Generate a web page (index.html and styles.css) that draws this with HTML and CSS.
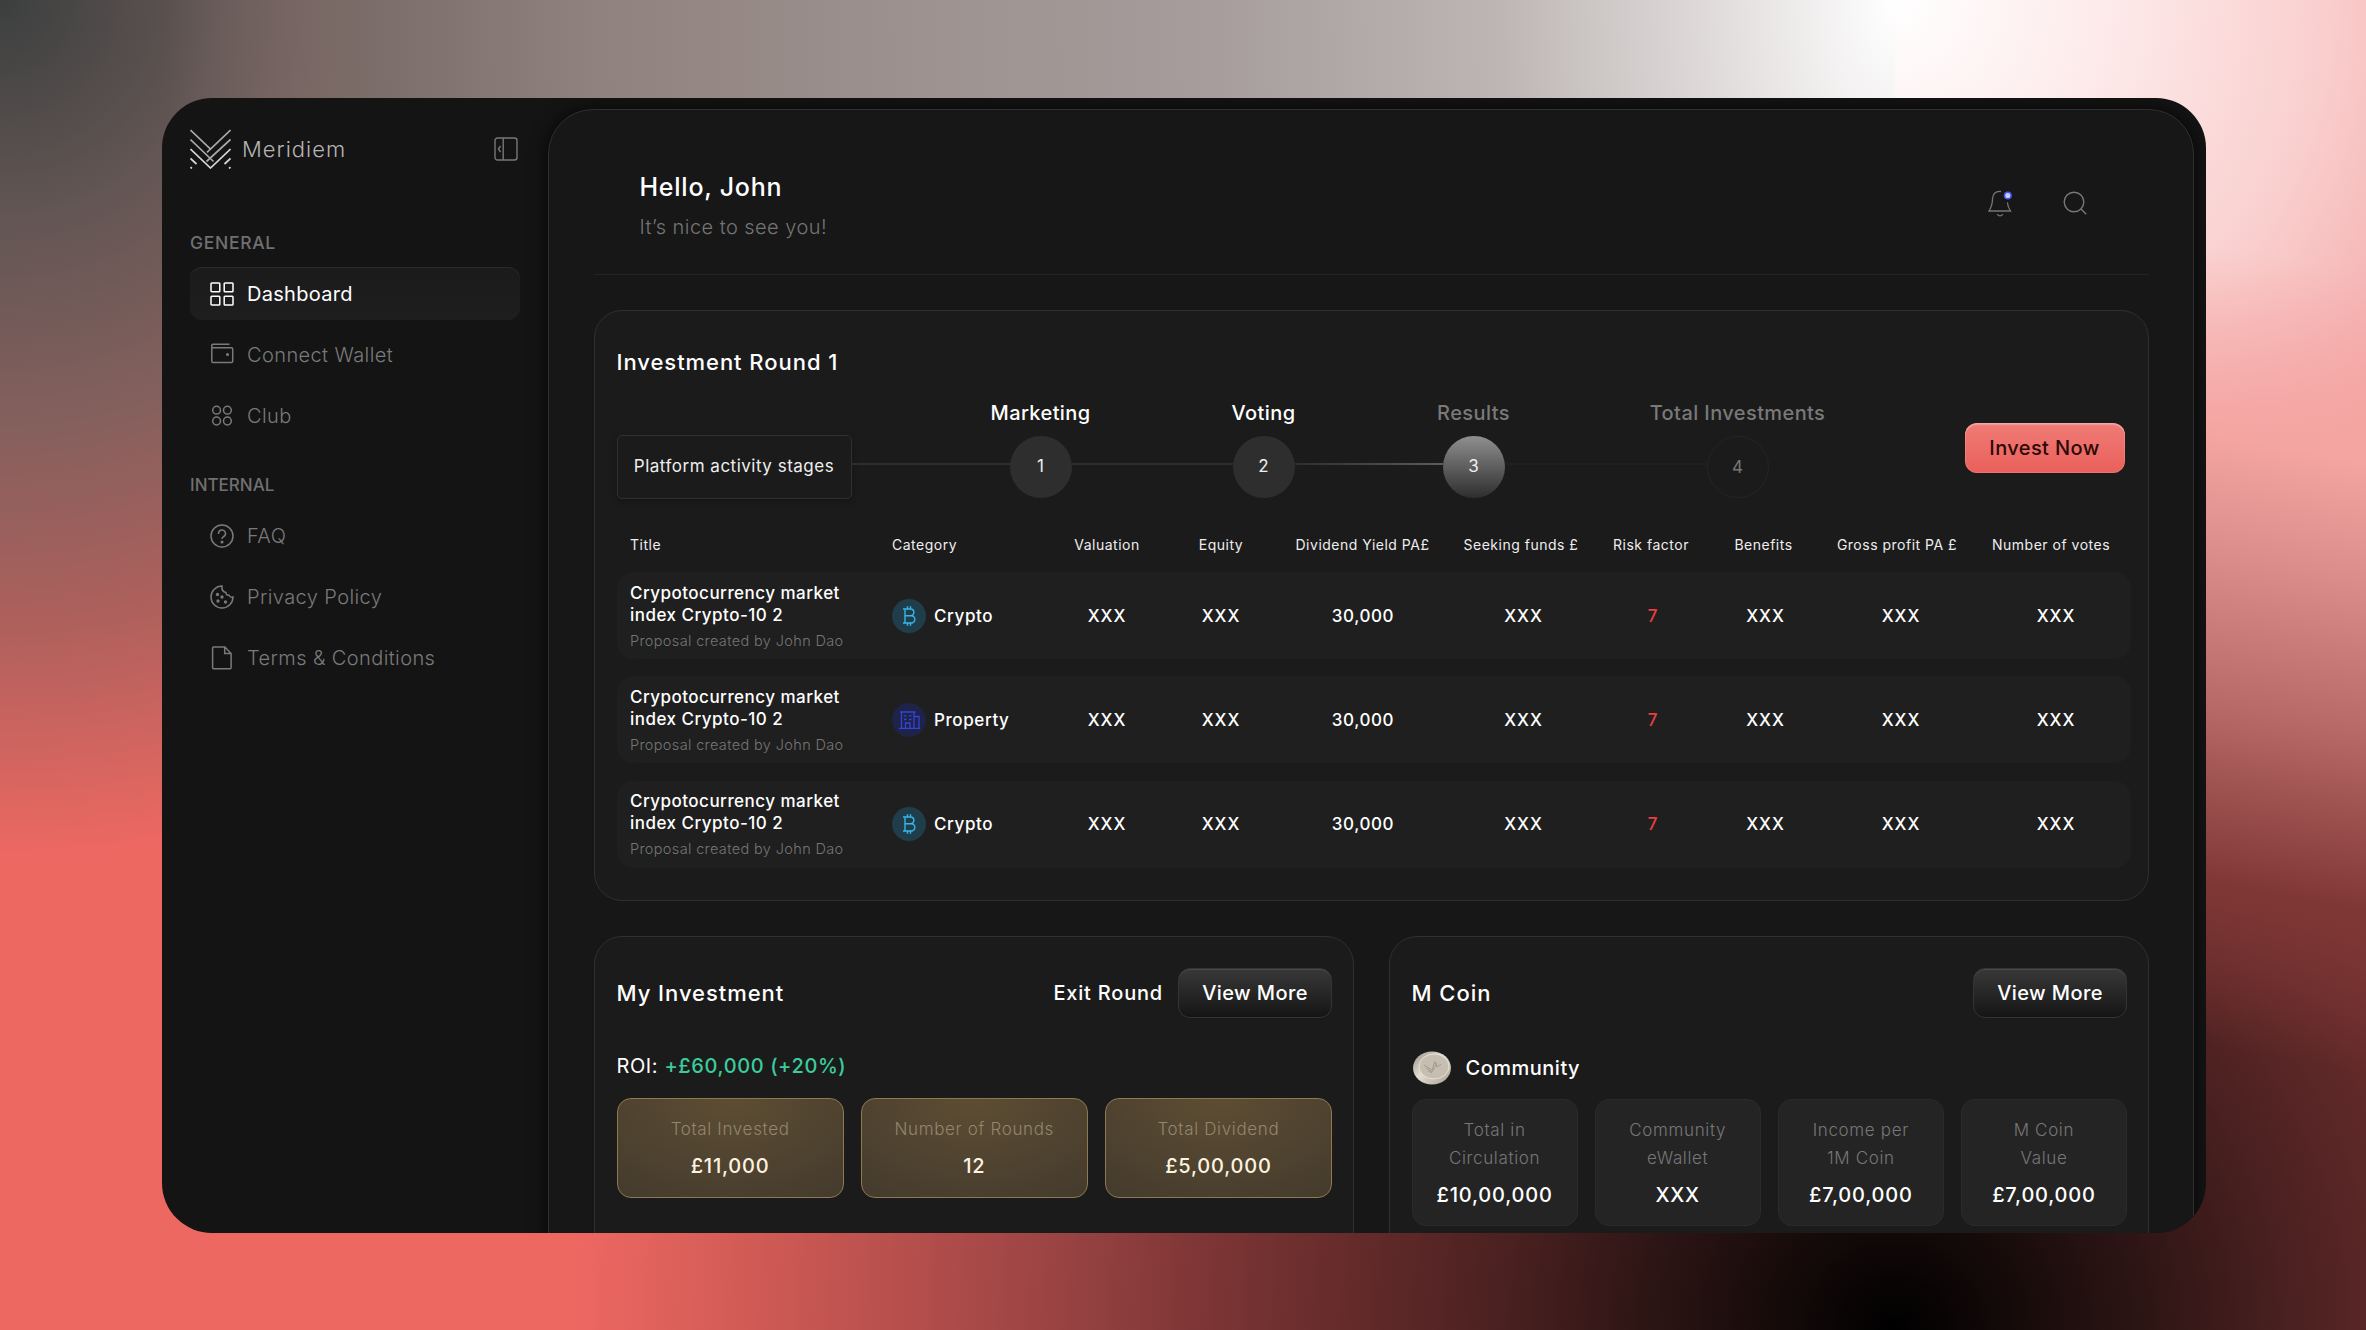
FILE: index.html
```html
<!DOCTYPE html>
<html lang="en">
<head>
    <meta charset="UTF-8">
    <meta name="viewport" content="width=device-width, initial-scale=1.0">
    <title>Meridiem Dashboard</title>
    <link rel="stylesheet" href="styles.css">
</head>
<body>
    <div class="window">
        <aside class="sidebar">
            <div class="brand">
                <svg class="brand-logo" width="41" height="40" viewBox="0 0 41 40" fill="none" stroke="#a8a8a8" stroke-width="1.7">
                    <path d="M.5 1l20 19 20-19"/>
                    <path d="M.5 10.500L23.500 32.500M40.500 10.500L16.500 32.500M17 23.300l3.500-3.300"/>
                    <path d="M.5 20l20 19 20-19" stroke="#d5d5d5"/>
                    <path d="M.5 29.500l6 5.500M40.500 29.500l-6 5.500M.5 38.200l1.500 1.200M40.500 38.200L39 39.400" stroke="#d5d5d5"/>
                </svg>
                <span class="brand-name">Meridiem</span>
                <svg class="brand-toggle" width="24" height="24" viewBox="0 0 24 24" fill="none" stroke="#777" stroke-width="1.4">
                    <rect x="1" y="1" width="22" height="22" rx="2.500"/>
                    <path d="M9.200 1v22M6.500 9L4.500 12l2 3"/>
                </svg>
            </div>

            <div class="nav-title">GENERAL</div>
            <nav class="nav">
                <a class="nav-item active">
                    <svg width="24" height="24" viewBox="0 0 24 24">
                        <rect x="1" y="1" width="8.800" height="8.800" rx=".8"/>
                        <rect x="14.200" y="1" width="8.800" height="8.800" rx=".8"/>
                        <rect x="1" y="14.200" width="8.800" height="8.800" rx=".8"/>
                        <rect x="14.200" y="14.200" width="8.800" height="8.800" rx=".8"/>
                    </svg>
                    Dashboard
                </a>
                <a class="nav-item">
                    <svg width="24" height="24" viewBox="0 0 24 24">
                        <path d="M19.500 1.200H3a1.200 1.200 0 0 0-1.200 1.200v15.800A1.300 1.300 0 0 0 3 19.500h18.500a1.200 1.200 0 0 0 1.200-1.200V6a1.200 1.200 0 0 0-1.200-1.200H1.800"/>
                        <circle cx="17.500" cy="11.500" r=".8" class="dot"/>
                    </svg>
                    Connect Wallet
                </a>
                <a class="nav-item">
                    <svg width="24" height="24" viewBox="0 0 24 24">
                        <circle cx="6.600" cy="6.200" r="3.900"/>
                        <circle cx="17.400" cy="6.200" r="3.900"/>
                        <circle cx="6.600" cy="17" r="3.900"/>
                        <circle cx="17.400" cy="17" r="3.900"/>
                    </svg>
                    Club
                </a>
            </nav>

            <div class="nav-title internal">INTERNAL</div>
            <nav class="nav">
                <a class="nav-item">
                    <svg width="24" height="24" viewBox="0 0 24 24">
                        <circle cx="12" cy="12" r="11"/>
                        <path d="M8.500 10V9.500a3.500 3.500 0 1 1 5.200 3c-1.200.7-1.700 1.200-1.700 2.500"/>
                        <circle cx="12" cy="18" r=".8" class="dot"/>
                    </svg>
                    FAQ
                </a>
                <a class="nav-item">
                    <svg width="24" height="24" viewBox="0 0 24 24">
                        <path d="M12 1a11 11 0 1 0 11 11c-1.700.5-3.300-.2-4-1.800-2 .3-3.200-.8-3-2.700C13.300 7 11.500 4.500 12 1z"/>
                        <circle cx="7.500" cy="9.500" r=".9" class="dot"/>
                        <circle cx="12" cy="12" r=".9" class="dot"/>
                        <circle cx="8" cy="16" r=".9" class="dot"/>
                        <circle cx="15.500" cy="17" r=".9" class="dot"/>
                    </svg>
                    Privacy Policy
                </a>
                <a class="nav-item">
                    <svg width="24" height="24" viewBox="0 0 24 24">
                        <path d="M3.500 1h11.400l6.200 6.500v14.300a.9.900 0 0 1-.9.900H3.500a.9.900 0 0 1-.9-.9V1.900a.9.900 0 0 1 .9-.9zM14.700 1v6.500h6.400"/>
                    </svg>
                    Terms &amp; Conditions
                </a>
            </nav>
        </aside>

        <main class="main">
            <header class="header">
                <div>
                    <h1>Hello, John</h1>
                    <p>It’s nice to see you!</p>
                </div>
                <div class="header-icons">
                    <svg width="26" height="28" viewBox="0 0 26 28" fill="none" stroke="#777" stroke-width="1.300" stroke-linecap="round">
                        <path d="M13.500 2.500c-5-.5-8 2.500-8 7.500 0 5-1 8-3.500 12h21.500c-1.700-2.500-2.700-4.800-3-8M10.500 25.500c1 1.700 4 1.700 5 0"/>
                        <circle cx="20.800" cy="6.500" r="3.300" fill="#c5ccff" stroke="#4a55e8" stroke-width="1.500"/>
                    </svg>
                    <svg width="24" height="24" viewBox="0 0 24 24" fill="none" stroke="#777" stroke-width="1.400">
                        <circle cx="11" cy="11" r="9.800"/>
                        <path d="M18 18l5.200 5.200"/>
                    </svg>
                </div>
            </header>

            <section class="card round">
                <h2>Investment Round 1</h2>
                <div class="stages">
                    <div class="stage-box">Platform activity stages</div>
                    <div class="line l1"></div>
                    <div class="step"><span class="step-name">Marketing</span><span class="circle">1</span></div>
                    <div class="line l2"></div>
                    <div class="step"><span class="step-name">Voting</span><span class="circle">2</span></div>
                    <div class="line l3"></div>
                    <div class="step current"><span class="step-name">Results</span><span class="circle">3</span></div>
                    <div class="line l4"></div>
                    <div class="step next"><span class="step-name">Total Investments</span><span class="circle">4</span></div>
                    <button class="btn btn-red">Invest Now</button>
                </div>

                <div class="table-head">
                    <span class="left">Title</span>
                    <span class="left">Category</span>
                    <span>Valuation</span>
                    <span>Equity</span>
                    <span>Dividend Yield PA£</span>
                    <span>Seeking funds £</span>
                    <span>Risk factor</span>
                    <span>Benefits</span>
                    <span>Gross profit PA £</span>
                    <span>Number of votes</span>
                </div>
                <div class="table-row">
                    <div class="proposal">
                        <strong>Crypotocurrency market<br>index Crypto-10 2</strong>
                        <small>Proposal created by John Dao</small>
                    </div>
                    <div class="category">
                        <svg width="34" height="34" viewBox="0 0 34 34" fill="none" stroke="#38b6e8" stroke-width="1.400">
                            <circle cx="17" cy="17" r="17" fill="#203d4b" stroke="none"/>
                            <path d="M11 10h7.500a3.300 3.300 0 0 1 0 6.700H13M18.500 16.700h.7a3.600 3.600 0 0 1 0 7.300H11M13 10v14M15.500 7.300V10M18.500 7.300V10M15.500 24v2.800M18.500 24v2.800"/>
                        </svg>
                        Crypto
                    </div>
                    <span class="xxx">XXX</span>
                    <span class="xxx">XXX</span>
                    <span>30,000</span>
                    <span class="xxx">XXX</span>
                    <span class="risk">7</span>
                    <span class="xxx">XXX</span>
                    <span class="xxx">XXX</span>
                    <span class="xxx">XXX</span>
                </div>
                <div class="table-row">
                    <div class="proposal">
                        <strong>Crypotocurrency market<br>index Crypto-10 2</strong>
                        <small>Proposal created by John Dao</small>
                    </div>
                    <div class="category">
                        <svg width="34" height="34" viewBox="0 0 34 34" fill="none" stroke="#2f45e0" stroke-width="1.300">
                            <circle cx="17" cy="17" r="17" fill="#1e2347" stroke="none"/>
                            <path d="M7 25.300h21M9.500 25V9M22 25V9M8 9h15.500M22 13.500h5V25M13.500 25v-5h4.500V25M12 12.800h2.500M17 12.800h2.500M12 16.500h2.500M17 16.500h2.500"/>
                        </svg>
                        Property
                    </div>
                    <span class="xxx">XXX</span>
                    <span class="xxx">XXX</span>
                    <span>30,000</span>
                    <span class="xxx">XXX</span>
                    <span class="risk">7</span>
                    <span class="xxx">XXX</span>
                    <span class="xxx">XXX</span>
                    <span class="xxx">XXX</span>
                </div>
                <div class="table-row">
                    <div class="proposal">
                        <strong>Crypotocurrency market<br>index Crypto-10 2</strong>
                        <small>Proposal created by John Dao</small>
                    </div>
                    <div class="category">
                        <svg width="34" height="34" viewBox="0 0 34 34" fill="none" stroke="#38b6e8" stroke-width="1.400">
                            <circle cx="17" cy="17" r="17" fill="#203d4b" stroke="none"/>
                            <path d="M11 10h7.500a3.300 3.300 0 0 1 0 6.700H13M18.500 16.700h.7a3.600 3.600 0 0 1 0 7.300H11M13 10v14M15.500 7.300V10M18.500 7.300V10M15.500 24v2.800M18.500 24v2.800"/>
                        </svg>
                        Crypto
                    </div>
                    <span class="xxx">XXX</span>
                    <span class="xxx">XXX</span>
                    <span>30,000</span>
                    <span class="xxx">XXX</span>
                    <span class="risk">7</span>
                    <span class="xxx">XXX</span>
                    <span class="xxx">XXX</span>
                    <span class="xxx">XXX</span>
                </div>
            </section>

            <div class="bottom">
                <section class="card panel">
                    <div class="panel-head">
                        <h2>My Investment</h2>
                        <a class="exit">Exit Round</a>
                        <button class="btn btn-dark">View More</button>
                    </div>
                    <div class="roi">ROI: <b>+£60,000 (+20%)</b></div>
                    <div class="tiles">
                        <div class="tile gold"><span>Total Invested</span><b>£11,000</b></div>
                        <div class="tile gold"><span>Number of Rounds</span><b>12</b></div>
                        <div class="tile gold"><span>Total Dividend</span><b>£5,00,000</b></div>
                    </div>
                </section>

                <section class="card panel">
                    <div class="panel-head">
                        <h2>M Coin</h2>
                        <button class="btn btn-dark">View More</button>
                    </div>
                    <div class="community">
                        <svg width="40" height="34" viewBox="0 0 40 34">
                            <defs>
                                <linearGradient id="coin" x1="0" y1="0" x2="1" y2="1">
                                    <stop offset="0" stop-color="#9a9084"/>
                                    <stop offset=".45" stop-color="#e2ddd2"/>
                                    <stop offset="1" stop-color="#a89f90"/>
                                </linearGradient>
                            </defs>
                            <ellipse cx="20" cy="17" rx="19" ry="16.500" fill="url(#coin)"/>
                            <ellipse cx="22" cy="15.500" rx="15" ry="12.500" fill="#c6beb0" stroke="#ece8df" stroke-width=".8"/>
                            <path d="M12 14l8 5 3-9M14 17l6 4 5-9M16 20l4 2M23 11l2 5 4-3" fill="none" stroke="#9b9387" stroke-width=".8"/>
                        </svg>
                        Community
                    </div>
                    <div class="tiles">
                        <div class="tile"><span>Total in<br>Circulation</span><b>£10,00,000</b></div>
                        <div class="tile"><span>Community<br>eWallet</span><b>XXX</b></div>
                        <div class="tile"><span>Income per<br>1M Coin</span><b>£7,00,000</b></div>
                        <div class="tile"><span>M Coin<br>Value</span><b>£7,00,000</b></div>
                    </div>
                </section>
            </div>
        </main>
    </div>
</body>
</html>
```
FILE: styles.css
```css
* {
    box-sizing: border-box;
}
body {
    margin: 0;
    height: 1330px;
    padding: 98px 160px 97px 162px;
    overflow: hidden;
    font-family: Inter, "Liberation Sans", sans-serif;
    color: #fff;
    background:
        linear-gradient(190deg, rgba(246, 185, 185, 0) 20%, #f4a5a2 34%, #d98c8a 43%, #b76967 54%, #7f3735 67%, rgba(110, 46, 44, 0) 79%) right top / 166px 1330px no-repeat,
        radial-gradient(circle at 0 0, #fff 0, #fde9e9 220px, #f9cfce 430px, #f6b9b9 540px, #f4a5a2 640px) right top / 471px 480px no-repeat,
        radial-gradient(ellipse 1880px 3500px at 1895px 0, #fff 0, #e2dedd 9%, #bdb6b5 21%, #a59c9b 37%, #9c918f 53%, #90827e 69%, #7b6d69 81%, rgba(98, 88, 86, 0) 92%) left top / 100% 480px no-repeat,
        radial-gradient(circle at 1895px 1330px, #000 0, #2a1413 235px, #4a2020 390px, #632a2a 537px, #7d3535 690px, #9a4343 840px, #b54f4c 990px, #d05a55 1140px, rgba(238, 104, 98, 0) 1325px),
        radial-gradient(circle at 0 0, #3c3f3f 0, #635654 220px, #83605d 420px, #ad605c 620px, #ee6862 860px);
}
h1, h2, p {
    margin: 0;
    font-weight: 500;
}
.window {
    display: flex;
    width: 2044px;
    height: 1135px;
    overflow: hidden;
    border-radius: 50px;
    background: #141414;
}

/* sidebar */
.sidebar {
    width: 386px;
    flex: none;
    padding: 30px 28px 0;
}
.brand {
    display: flex;
    align-items: center;
    height: 42px;
}
.brand-name {
    margin-left: 11px;
    font-size: 22px;
    font-weight: 300;
    letter-spacing: 1px;
    color: #b4b4b4;
}
.brand-toggle {
    margin-left: auto;
    margin-right: 2px;
}
.nav-title {
    margin-top: 63px;
    height: 20px;
    line-height: 20px;
    font-size: 17.5px;
    font-weight: 500;
    letter-spacing: 0.7px;
    color: #707070;
}
.nav-title.internal {
    margin-top: 33px;
    font-size: 17px;
    letter-spacing: 0;
}
.nav {
    display: flex;
    flex-direction: column;
    gap: 8px;
    margin-top: 14px;
}
.nav-item {
    display: flex;
    align-items: center;
    height: 53px;
    gap: 13.5px;
    padding-left: 19.5px;
    border-radius: 12px;
    font-size: 20px;
    font-weight: 300;
    letter-spacing: 0.4px;
    color: #7a7a7a;
}
.nav-item svg {
    fill: none;
    stroke: #7a7a7a;
    stroke-width: 1.5;
}
.nav-item .dot {
    fill: #7a7a7a;
}
.nav-item.active {
    width: 330px;
    background: linear-gradient(#1b1b1b, #1e1e1e);
    box-shadow: inset 0 1px 0 #2a2a2a;
    font-weight: 400;
    letter-spacing: 0.3px;
    color: #fff;
}
.nav-item.active svg {
    stroke: #fff;
}

/* main */
.main {
    flex: none;
    width: 1646px;
    height: 1240px;
    margin-top: 11px;
    padding: 0 44.5px;
    border: 1px solid #303030;
    border-radius: 45px;
    background: #171717;
    box-shadow: 0 0 18px rgba(0, 0, 0, 0.7);
}
.header {
    display: flex;
    justify-content: space-between;
    height: 165px;
    padding: 62px 62px 0 46px;
    border-bottom: 1px solid #242424;
}
.header h1 {
    line-height: 30px;
    font-size: 25px;
    font-weight: 500;
    letter-spacing: 0.75px;
}
.header p {
    margin-top: 12px;
    line-height: 26px;
    font-size: 20px;
    font-weight: 300;
    letter-spacing: 0.45px;
    color: #747474;
}
.header-icons {
    display: flex;
    align-items: center;
    gap: 50px;
    height: 62px;
}
.card {
    border: 1px solid #303030;
    border-radius: 28px;
    background: #1b1b1b;
}
.card h2 {
    line-height: 26px;
    font-size: 22px;
    font-weight: 500;
    letter-spacing: 0.95px;
}
.round {
    height: 591px;
    margin-top: 35px;
    padding: 38px 17px 0 22px;
}
.stages {
    display: flex;
    align-items: flex-end;
    margin-top: 26px;
}
.stage-box {
    width: 235px;
    height: 64px;
    line-height: 61px;
    border: 1.5px solid #303030;
    border-radius: 5px;
    text-align: center;
    font-size: 17px;
    letter-spacing: 0.5px;
    color: #eee;
    box-shadow: 0 3px 6px rgba(0, 0, 0, 0.25);
}
.step {
    display: flex;
    flex-direction: column;
    align-items: center;
    width: 62px;
    gap: 11px;
    padding-bottom: 1px;
    white-space: nowrap;
}
.step-name {
    line-height: 24px;
    font-size: 20px;
    font-weight: 500;
    letter-spacing: 0.4px;
}
.circle {
    width: 62px;
    height: 62px;
    line-height: 61px;
    border-radius: 50%;
    background: #2e2e2e;
    text-align: center;
    font-size: 17px;
    color: #eee;
}
.current .step-name,
.next .step-name {
    color: #797979;
}
.current .circle {
    background: linear-gradient(#8f8f8f, #2e2e2e);
}
.next .circle {
    border: 1px solid #242424;
    background: none;
    color: #777;
}
.line {
    height: 2px;
    margin-bottom: 34px;
    background: #2e2e2e;
}
.l1 { width: 158px; }
.l2 { width: 161px; }
.l3 {
    width: 148px;
    background: linear-gradient(90deg, #2e2e2e, #5c5c5c);
}
.l4 {
    width: 202px;
    background: #202020;
}
.btn {
    height: 50px;
    padding: 0;
    border: 0;
    border-radius: 12px;
    font-family: inherit;
    font-size: 20px;
    font-weight: 500;
    letter-spacing: 0.4px;
}
.btn-red {
    width: 160px;
    margin: 0 6px 26px auto;
    background: linear-gradient(#f07b76, #ea605b);
    box-shadow: inset 0 2px 1px rgba(255, 255, 255, 0.25), inset 0 0 0 1px rgba(255, 255, 255, 0.12);
    color: #2b0907;
}
.btn-dark {
    width: 154px;
    border: 1.5px solid #343434;
    background: linear-gradient(#383838, #151515);
    box-shadow: inset 0 1px 0 #4a4a4a;
    color: #fff;
}
.table-head,
.table-row {
    display: grid;
    align-items: center;
    padding-left: 13.5px;
    text-align: center;
    white-space: nowrap;
}
.table-head {
    grid-template-columns: 262px 155px 120px 108px 175px 142px 118px 107px 160px 148px;
    height: 20px;
    margin: 35px 0 18px;
    font-size: 14px;
    letter-spacing: 0.5px;
    color: #eee;
}
.table-head .left {
    text-align: left;
}
.table-row {
    grid-template-columns: 262px 155px 120px 108px 176px 145px 114px 111px 160px 150px;
    height: 87px;
    margin-bottom: 17.4px;
    border-radius: 16px;
    background: #1f1f1f;
    font-size: 17px;
    font-weight: 500;
    letter-spacing: 0.6px;
}
.xxx {
    letter-spacing: 1px;
}
.proposal {
    text-align: left;
}
.proposal strong {
    display: block;
    line-height: 22px;
    font-size: 17px;
    font-weight: 500;
    letter-spacing: 0.48px;
}
.proposal small {
    display: block;
    margin-top: 6px;
    line-height: 18px;
    font-size: 14.5px;
    font-weight: 300;
    letter-spacing: 0.36px;
    color: #757575;
}
.category {
    display: flex;
    align-items: center;
    gap: 8px;
}
.risk {
    color: #e5403e;
}

/* bottom cards */
.bottom {
    display: flex;
    gap: 35px;
    margin-top: 35px;
}
.panel {
    width: 760px;
    height: 330px;
    padding: 31px 20.5px 0 22px;
}
.panel-head {
    display: flex;
    align-items: center;
}
.panel-head h2 {
    margin-right: auto;
}
.exit {
    margin-right: 15px;
    font-size: 20px;
    font-weight: 500;
    letter-spacing: 0.8px;
}
.roi {
    margin-top: 36px;
    line-height: 24px;
    font-size: 20px;
    letter-spacing: 0.6px;
}
.roi b {
    font-weight: 500;
    color: #3ccb9b;
}
.community {
    display: flex;
    align-items: center;
    gap: 14px;
    height: 34px;
    margin: 33px 0 -6px;
    font-size: 20px;
    font-weight: 500;
    letter-spacing: 0.5px;
}
.tiles {
    display: flex;
    gap: 17px;
    margin-top: 20px;
}
.tile {
    display: flex;
    flex: 1;
    flex-direction: column;
    align-items: center;
    gap: 10px;
    height: 127px;
    padding-top: 16px;
    border: 1.5px solid #2b2b2b;
    border-radius: 14px;
    background: #242424;
    text-align: center;
    white-space: nowrap;
}
.tile span {
    line-height: 28px;
    font-size: 17px;
    font-weight: 300;
    letter-spacing: 0.65px;
    color: #777;
}
.tile b {
    line-height: 26px;
    font-size: 20px;
    font-weight: 500;
    letter-spacing: 0.8px;
}
.tile.gold {
    height: 100px;
    border-color: #8f7a50;
    background: radial-gradient(ellipse 90% 130% at 50% 0, #5d4d33, #433a2d);
}
.tile.gold span {
    color: #91866f;
}
.tile.gold b {
    color: #fdf3e0;
}
```
